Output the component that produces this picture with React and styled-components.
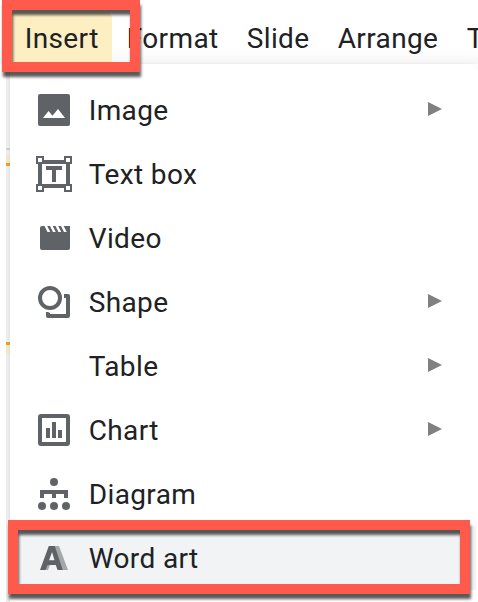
import React from "react";
import styled, { createGlobalStyle } from "styled-components";

const GlobalStyle = createGlobalStyle`
  * { box-sizing: border-box; }
  html, body { margin: 0; padding: 0; background: #fff; overflow: hidden; }
`;

const Screen = styled.div`
  position: relative;
  display: flex;
  flex-direction: column;
  width: 478px;
  height: 602px;
  overflow: hidden;
  background: #fff;
  color: #202124;
  font: 28px/32px Roboto, sans-serif;
  letter-spacing: 0.38px;
`;

const MenuBar = styled.nav`
  display: flex;
  flex: none;
  height: 64px;
  padding: 12px 0 0 10px;
  background: linear-gradient(#fff 48px, #f6f6f6 64px);
`;

const MenuTitle = styled.div`
  flex: none;
  width: ${(p) => p.$width}px;
  padding: 11px 0 0 14.700px;
  border-radius: 6px 6px 0 0;
  background: ${(p) => (p.$active ? "#feefc3" : "transparent")};
  white-space: nowrap;
`;

const Body = styled.div`
  display: flex;
  flex: 1;
  padding-left: 6px;
`;

const Canvas = styled.div`
  display: flex;
  flex-direction: column;
  flex: none;
  width: 4px;
  background: #ececec;
`;

const Strip = styled.div`
  flex: none;
  height: ${(p) => p.$h}px;
  background: ${(p) => p.$color || "transparent"};
`;

const Menu = styled.div`
  flex: 1;
  padding-top: 14px;
  border-radius: 0 8px 0 0;
  background: #fff;
  box-shadow: 0 0 3px rgba(0, 0, 0, 0.08);
`;

const Row = styled.div`
  display: flex;
  align-items: center;
  height: 64px;
  margin-right: 2px;
  padding-left: 24px;
  background: ${(p) => (p.$active ? "#f1f3f4" : "transparent")};
`;

const IconSlot = styled.span`
  display: flex;
  flex: none;
  width: 54.700px;
  svg { display: block; }
`;

const Label = styled.span`
  flex: 1;
  padding-top: 2px;
`;

const Arrow = styled.span`
  width: 14px;
  height: 14px;
  margin: 0 34px 2px 0;
  background: #808080;
  clip-path: polygon(0 0, 100% 50%, 0 100%);
`;

const Highlight = styled.div`
  position: absolute;
  left: ${(p) => p.$x}px;
  top: ${(p) => p.$y}px;
  width: ${(p) => p.$w}px;
  height: ${(p) => p.$h}px;
  border: 10px solid #ff5a4b;
  filter: drop-shadow(1px 5px 1.5px rgba(0, 0, 0, 0.65));
  pointer-events: none;
`;

const Svg = ({ children }) => (
  <svg width="40" height="40" viewBox="34 0 40 40" fill="#5f6368">
    {children}
  </svg>
);

const icons = {
  image: (
    <Svg>
      <rect x="38" y="4" width="32" height="32" rx="2" />
      <path d="M43 28l5.500-7 4 4.800L58 19l7 9z" fill="#fff" />
    </Svg>
  ),
  textBox: (
    <Svg>
      <path d="M40 8h28v24H40z" fill="none" stroke="#5f6368" strokeWidth="4" />
      <g fill="#fff" stroke="#5f6368" strokeWidth="2">
        <path d="M37 3h6v6h-6zM65 3h6v6h-6zM37 31h6v6h-6zM65 31h6v6h-6z" />
      </g>
      <path d="M46 12h16v4h-6v12h-4V16h-6z" />
    </Svg>
  ),
  video: (
    <Svg>
      <rect x="40" y="8" width="30" height="24" rx="2" />
      <path d="M66 8h4v4h-4z" />
      <path
        d="M44.500 8h2.700l3 6h-2.700zM50 8h2.700l3 6H53zM55.500 8h2.700l3 6h-2.700zM61 8h2.700l3 6H64z"
        fill="#fff"
      />
    </Svg>
  ),
  shape: (
    <Svg>
      <circle cx="50" cy="16" r="10" fill="none" stroke="#5f6368" strokeWidth="4" />
      <path d="M64 12h4a2 2 0 0 1 2 2v20a2 2 0 0 1-2 2H48a2 2 0 0 1-2-2v-4h2l2 1v1h16V16h-2z" />
    </Svg>
  ),
  chart: (
    <Svg>
      <rect x="40" y="6" width="28" height="28" rx="1" fill="none" stroke="#5f6368" strokeWidth="4" />
      <path d="M46 18h4v10h-4zM52 12h4v16h-4zM58 20h4v8h-4z" />
    </Svg>
  ),
  diagram: (
    <Svg>
      <circle cx="54" cy="8" r="4" />
      <path d="M40 16h28v8h-4v-4h-8v4h-4v-4h-8v4h-4z" />
      <circle cx="42" cy="32" r="4" />
      <circle cx="54" cy="32" r="4" />
      <circle cx="66" cy="32" r="4" />
    </Svg>
  ),
  wordArt: (
    <Svg>
      <path d="M52 8h7l9 24h-7l-4-10-7 5-2 5h-4z" fill="#a5a8ab" />
      <path d="M52.500 12l4 10h-8z" fill="#f1f3f4" />
      <path fillRule="evenodd" d="M48.800 8h6l8 24h-5.300l-1.700-5h-8.300l-2 5H40zM52 14l-3 8.500h5.600z" />
    </Svg>
  ),
};

const rows = [
  { label: "Image", icon: "image", more: true },
  { label: "Text box", icon: "textBox" },
  { label: "Video", icon: "video" },
  { label: "Shape", icon: "shape", more: true },
  { label: "Table", more: true },
  { label: "Chart", icon: "chart", more: true },
  { label: "Diagram", icon: "diagram" },
  { label: "Word art", icon: "wordArt", active: true },
];

export default function App() {
  return (
    <Screen>
      <GlobalStyle />
      <MenuBar>
        <MenuTitle $width={102} $active>Insert</MenuTitle>
        <MenuTitle $width={120}>Format</MenuTitle>
        <MenuTitle $width={91}>Slide</MenuTitle>
        <MenuTitle $width={129}>Arrange</MenuTitle>
        <MenuTitle $width={80}>Tools</MenuTitle>
      </MenuBar>
      <Body>
        <Canvas>
          <Strip $h={84} />
          <Strip $h={2} $color="#cfd2d4" />
          <Strip $h={4} />
          <Strip $h={9} $color="#efe8cf" />
          <Strip $h={3} $color="#e8a317" />
          <Strip $h={176} />
          <Strip $h={3} $color="#e8a317" />
          <Strip $h={9} $color="#efe8cf" />
        </Canvas>
        <Menu>
          {rows.map((r) => (
            <Row key={r.label} $active={r.active}>
              <IconSlot>{r.icon && icons[r.icon]}</IconSlot>
              <Label>{r.label}</Label>
              {r.more && <Arrow />}
            </Row>
          ))}
        </Menu>
      </Body>
      <Highlight $x={2} $y={0} $w={138} $h={72} />
      <Highlight $x={8} $y={520} $w={462} $h={74} />
    </Screen>
  );
}
